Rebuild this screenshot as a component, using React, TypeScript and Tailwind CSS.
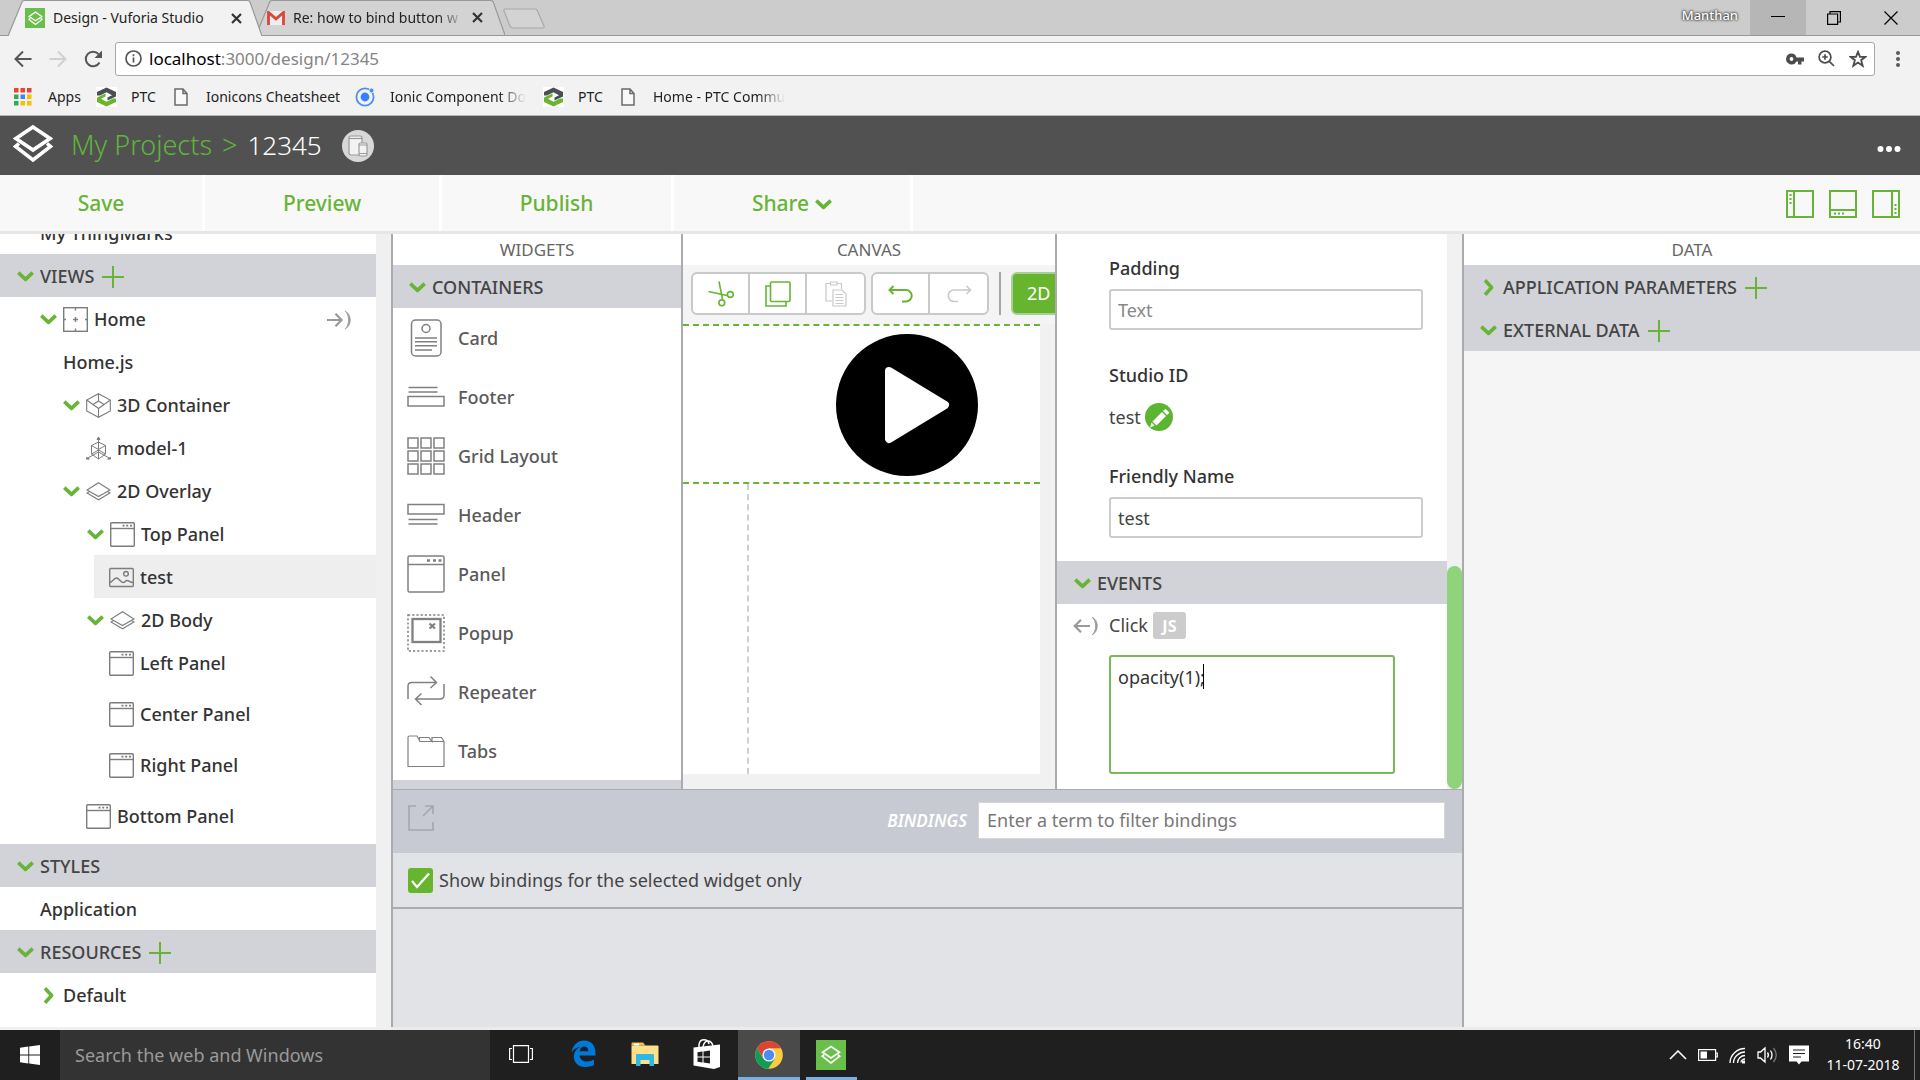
import React from "react";

type Kids = { children?: React.ReactNode };

const GREEN = "#67b436";

/* ---------- small shared glyphs ---------- */

function Chevron({ dir = "down", size = 17 }: { dir?: "down" | "right"; size?: number }) {
  return (
    <svg width={size} height={size} viewBox="0 0 17 17" fill="none" stroke={GREEN} strokeWidth="3.6" strokeLinecap="butt">
      {dir === "down" ? <path d="M1.3 4.6 8.5 11.4 15.7 4.6" strokeLinejoin="round" /> : <path d="M5 1.3 11.6 8.5 5 15.7" strokeLinejoin="round" />}
    </svg>
  );
}

function Plus() {
  return (
    <svg width="22" height="22" viewBox="0 0 22 22" stroke={GREEN} strokeWidth="2">
      <path d="M11 0v22M0 11h22" />
    </svg>
  );
}

function Layers({ color = "#fff", size = 40, stroke = 3.6 }: { color?: string; size?: number; stroke?: number }) {
  return (
    <svg width={size} height={size} viewBox="0 0 40 40" fill="none" stroke={color} strokeWidth={stroke}>
      <path d="M20 3 37 14.500 20 26 3 14.500Z" />
      <path d="M6 19.500 2.500 22.500 20 36 37.500 22.500 34 19.500" />
    </svg>
  );
}

function SignalArrow({ left = false }: { left?: boolean }) {
  return (
    <svg width="26" height="20" viewBox="0 0 26 20" fill="none" stroke="#999" strokeWidth="2.2">
      {left ? <path d="M17 10H2M8 3.8 1.8 10 8 16.2" /> : <path d="M1 10h14M9.5 3.8 15.5 10l-6 6.2" />}
      <path d="M19 1c4.8 3.6 4.8 14.400 0 18 7-3.600 7-14.400 0-18Z" fill="#999" stroke="#999" strokeWidth="0.8" />
    </svg>
  );
}

const thin = { fill: "none", stroke: "#7c7c7c", strokeWidth: 1.4 } as const;

function ViewIcon() {
  return (
    <svg width="25" height="25" viewBox="0 0 25 25" {...thin}>
      <rect x="0.7" y="0.7" width="23.6" height="23.6" />
      <path d="M12.500 1v2.500M12.500 21.500v2.500M1 12.500h2M22 12.500h2M12.500 10v5M10 12.500h5" />
    </svg>
  );
}
function CubeIcon() {
  return (
    <svg width="25" height="25" viewBox="0 0 25 25" {...thin} strokeWidth={1.1}>
      <path d="M12.500 0.700 24.300 7v11L12.500 24.300 0.700 18V7Z" />
      <path d="M0.700 7 12.500 15.500 24.300 7M12.500 15.500v8.800M12.500 0.700V8M7 11.500 12.500 8l5.500 3.500-5.500 4Z" />
    </svg>
  );
}
function ModelIcon() {
  return (
    <svg width="25" height="25" viewBox="0 0 25 25" {...thin} strokeWidth={1}>
      <path d="M12.500 6 19.500 9.500v8.500L12.500 23 5.500 18V9.500ZM5.500 9.500l7 4 7-4M12.500 2v21M1 22.500l11.500-6.500L24 22.500M5.500 18l7-4 7 4" />
      <path d="M11 3.500 12.500 1 14 3.500ZM0.500 21.500l0 1.600 2.800 0ZM24.500 21.500l0 1.600-2.800 0Z" fill="#7c7c7c" />
    </svg>
  );
}
function OverlayIcon() {
  return (
    <svg width="25" height="25" viewBox="0 0 25 25" {...thin} strokeWidth={1.1}>
      <path d="M12.500 3.700 24 11 12.500 17.500 1 11Z" />
      <path d="M3.500 12.500 1 14l11.500 6.800L24 14l-2.500-1.500" />
    </svg>
  );
}
function PanelIcon() {
  return (
    <svg width="25" height="25" viewBox="0 0 25 25" {...thin}>
      <rect x="0.7" y="0.7" width="23.6" height="23.6" rx="1" />
      <path d="M1 6.500h23" />
      <path d="M12.500 3.700h2M16.200 3.700h2M20 3.700h2" strokeWidth="1.800" />
    </svg>
  );
}
function ImageIcon() {
  return (
    <svg width="25" height="25" viewBox="0 0 25 25" {...thin}>
      <rect x="0.7" y="3.500" width="23.6" height="18" rx="1" />
      <circle cx="17" cy="8.800" r="2.300" />
      <path d="M1 17.500c3-1 4-4.500 6.500-4.500s4 4.500 6.500 4.500 2-2 4-2 3 2 6 2" />
    </svg>
  );
}

/* ---------- browser window frame ---------- */

function TabShape({ active = false }: { active?: boolean }) {
  return (
    <svg className="absolute inset-0 h-full w-full" viewBox="0 0 254 36" preserveAspectRatio="none">
      <path d="M0 36 14 2Q15 0.500 17 0.500H239Q241 0.500 242 2L254 36" fill={active ? "#f2f2f2" : "#d3d3d3"} stroke="#989898" strokeWidth="1.200" />
    </svg>
  );
}

function CloseX() {
  return (
    <svg width="11" height="11" viewBox="0 0 11 11" stroke="#333" strokeWidth="2.200">
      <path d="M1 1l9 9M10 1l-9 9" />
    </svg>
  );
}

function TabStrip() {
  return (
    <div className="flex h-9 items-stretch border-b border-[#989898] bg-[#cccccc] pl-2">
      <div className="relative z-10 -mb-px flex w-[254px] items-center pr-5 pl-[17px]">
        <TabShape active />
        <span className="relative flex h-5 w-5 items-center justify-center bg-[#6abf4b]">
          <Layers size={15} stroke={3.400} />
        </span>
        <span className="relative ml-2 flex-1 text-sm whitespace-nowrap text-[#222]">Design - Vuforia Studio</span>
        <button aria-label="Close tab" className="relative"><CloseX /></button>
      </div>
      <div className="relative -ml-1.5 flex w-[249px] items-center pr-[22px] pl-[11px]">
        <TabShape />
        <svg className="relative" width="18" height="14" viewBox="0 0 18 14">
          <path d="M1 0h16v14H1Z" fill="#eee" />
          <path d="M1.500 14V1.500L9 7.800l7.500-6.300V14" fill="none" stroke="#d9463a" strokeWidth="2.800" />
        </svg>
        <span className="relative ml-2 flex-1 overflow-hidden text-sm whitespace-nowrap text-[#222] [mask-image:linear-gradient(to_right,black_85%,transparent)]">
          Re: how to bind button w
        </span>
        <button aria-label="Close tab" className="relative ml-2"><CloseX /></button>
      </div>
      <button aria-label="New tab" className="-ml-0.5 flex items-center pt-0.5">
        <svg width="42" height="21" viewBox="0 0 42 21" fill="#d3d3d3" stroke="#a8a8a8" strokeWidth="1.200">
          <path d="M2 1H32Q33.500 1 34.500 3L41 18Q41.500 20 39.500 20H10Q8 20 7 18L1 3Q0.500 1 2 1Z" />
        </svg>
      </button>
      <div className="flex-1" />
      <span className="mt-1.5 mr-3 text-[13px] font-medium text-white [text-shadow:0_0_3px_#222,0_0_2px_#222]">Manthan</span>
      <button aria-label="Minimize" className="flex w-14 items-center justify-center bg-[#b6b6b6]">
        <svg width="14" height="14" viewBox="0 0 14 14" stroke="#000"><path d="M0 5.500h14" /></svg>
      </button>
      <button aria-label="Restore" className="flex w-14 items-center justify-center">
        <svg width="14" height="14" viewBox="0 0 14 14" fill="none" stroke="#000" strokeWidth="1.200"><path d="M0.600 3h10v10.400h-10ZM3 3V0.600h10.400V11H11" /></svg>
      </button>
      <button aria-label="Close" className="flex w-[58px] items-center justify-center">
        <svg width="14" height="14" viewBox="0 0 14 14" stroke="#000" strokeWidth="1.200"><path d="M0.500 0.500l13 13M13.500 0.500l-13 13" /></svg>
      </button>
    </div>
  );
}

function AddressBar() {
  return (
    <div className="flex h-[45px] items-center bg-[#f2f2f2] pr-5 pl-[14px]">
      <button aria-label="Back">
        <svg width="18" height="18" viewBox="0 0 18 18" fill="none" stroke="#555" strokeWidth="2"><path d="M17.500 9H2M9 1.500 1.500 9 9 16.500" /></svg>
      </button>
      <button aria-label="Forward" className="ml-[17px]">
        <svg width="18" height="18" viewBox="0 0 18 18" fill="none" stroke="#d0d0d0" strokeWidth="2"><path d="M0.500 9H16M9 1.500 16.500 9 9 16.500" /></svg>
      </button>
      <button aria-label="Reload" className="ml-[17px]">
        <svg width="19" height="18" viewBox="0 0 19 18" fill="none" stroke="#555" strokeWidth="2"><path d="M15.500 12.500A7.300 7.300 0 1 1 14.500 4" /><path d="M18 0.500V8H10.500Z" fill="#555" stroke="none" /></svg>
      </button>
      <div className="ml-[12px] flex h-[34px] flex-1 items-center rounded-[3px] border border-[#a9a9a9] bg-white pr-[7px] pl-[9px]">
        <svg width="17" height="17" viewBox="0 0 17 17" fill="none" stroke="#555" strokeWidth="1.700"><circle cx="8.500" cy="8.500" r="7.500" /><path d="M8.500 7.500v5M8.500 4.300v2" /></svg>
        <div className="ml-[7px] flex-1 text-[17px] text-[#858585]"><span className="text-black">localhost</span>:3000/design/12345</div>
        <div className="flex items-center gap-[14px]">
          <svg width="18" height="12" viewBox="0 0 18 12" fill="#4c4c4c"><path fillRule="evenodd" d="M5.500 0.500a5.500 5.500 0 1 0 5 8H12v3h3.500v-3H18v-4h-7.500a5.500 5.500 0 0 0-5-4Zm0 3.600a1.900 1.900 0 1 1 0 3.800 1.900 1.900 0 0 1 0-3.800Z" /></svg>
          <svg width="17" height="17" viewBox="0 0 17 17" fill="none" stroke="#4c4c4c" strokeWidth="1.700"><circle cx="7" cy="7" r="5.900" /><path d="M11.300 11.300 16 16M7 4.200v5.600M4.200 7h5.600" /></svg>
          <svg width="18" height="18" viewBox="0 0 18 18" fill="none" stroke="#4c4c4c" strokeWidth="1.800"><path d="M9 1.800l2 5h5.400l-4.300 3.400 1.600 5.600L9 12.500l-4.700 3.300 1.600-5.600L1.600 6.800H7Z" /></svg>
        </div>
      </div>
      <button aria-label="Menu" className="ml-[21px]">
        <svg width="4" height="16" viewBox="0 0 4 16" fill="#5a5a5a"><circle cx="2" cy="2" r="2" /><circle cx="2" cy="8" r="2" /><circle cx="2" cy="14" r="2" /></svg>
      </button>
    </div>
  );
}

function PtcLogo() {
  return (
    <svg width="21" height="20" viewBox="0 0 21 20">
      <rect width="21" height="20" fill="#fff" />
      <path d="M1 8.500V5L10.500 0.500 20 5v4.500L11.500 13.500V10.500L16 8.300 10.500 5.300 4 8.500Z" fill="#4a4f53" />
      <path d="M20 11.500V15L10.500 19.500 1 15V10.500L9.500 6.500V9.500L5 11.700l5.500 3L17 11.500Z" fill="#6ab42e" />
    </svg>
  );
}
function PageIcon() {
  return (
    <svg width="14" height="18" viewBox="0 0 14 18" fill="#f8f8f8" stroke="#6a6a6a" strokeWidth="1.500"><path d="M1 1h8l4 4.500V17H1ZM9 1v4.500h4" /></svg>
  );
}
function AppsIcon() {
  const c = ["#ea4335", "#ea4335", "#ea4335", "#34a853", "#4285f4", "#fbbc05", "#34a853", "#fbbc05", "#fbbc05"];
  return (
    <svg width="18" height="18" viewBox="0 0 18 18">
      {c.map((f, i) => <rect key={i} x={(i % 3) * 6.500} y={Math.floor(i / 3) * 6.500} width="4.500" height="4.500" fill={f} />)}
    </svg>
  );
}
function IonicIcon() {
  return (
    <svg width="21" height="20" viewBox="0 0 21 20"><circle cx="10" cy="10" r="8.600" fill="none" stroke="#4e8ef7" strokeWidth="1.800" /><circle cx="10" cy="10" r="4.400" fill="#3880ff" /><circle cx="16.500" cy="3.500" r="2.400" fill="#4e8ef7" stroke="#f2f2f2" strokeWidth="0.800" /></svg>
  );
}

function Bookmark({ icon, label, box, fade }: { icon: React.ReactNode; label: string; box: string; fade?: boolean }) {
  return (
    <a href="#" className={"flex items-center whitespace-nowrap " + box}>
      {icon}
      <span className={"overflow-hidden " + (fade ? "[mask-image:linear-gradient(to_right,black_80%,transparent)]" : "")}>{label}</span>
    </a>
  );
}

function BookmarksBar() {
  return (
    <nav className="flex h-[35px] items-center border-b border-[#b5b5b5] bg-[#f2f2f2] pb-[3px] pl-[14px] text-[14px] text-[#222]">
      <Bookmark icon={<AppsIcon />} label="Apps" box="w-[82px] gap-4" />
      <Bookmark icon={<PtcLogo />} label="PTC" box="w-[78px] gap-[14px]" />
      <Bookmark icon={<PageIcon />} label="Ionicons Cheatsheet" box="w-[181px] gap-[18px]" />
      <Bookmark icon={<IonicIcon />} label="Ionic Component Do" box="w-[172px] gap-[14px]" fade />
      <span className="w-4" />
      <Bookmark icon={<PtcLogo />} label="PTC" box="w-[78px] gap-[14px]" />
      <Bookmark icon={<PageIcon />} label="Home - PTC Commu" box="w-[168px] gap-[18px]" fade />
    </nav>
  );
}

/* ---------- studio chrome ---------- */

function StudioHeader() {
  return (
    <header className="flex h-[59px] items-center bg-[#515151] pr-[19px] pl-[13px]">
      <span className="pb-1"><Layers size={40} stroke={3.600} /></span>
      <h1 className="ml-[18px] flex items-center gap-[10px] text-[27px] font-light">
        <a href="#" className="text-[#5fb53a]">My Projects</a>
        <span className="text-[#5fb53a]">&gt;</span>
        <span className="text-[26px] text-white">12345</span>
      </h1>
      <span className="ml-5 flex h-8 w-8 items-center justify-center rounded-full bg-[#d8d8d8]">
        <svg width="20" height="22" viewBox="0 0 20 22" fill="#f2f2f2" stroke="#9a9a9a" strokeWidth="1.200"><rect x="1" y="1" width="13" height="19" rx="2" /><path d="M1 3.500h13" /><rect x="11" y="8" width="8" height="13" rx="1.500" /><path d="M11 10h8M11 18.500h8" /></svg>
      </span>
      <div className="flex-1" />
      <button aria-label="More" className="mt-[7px]">
        <svg width="24" height="8" viewBox="0 0 24 8" fill="#fff"><circle cx="3.500" cy="4" r="3" /><circle cx="12" cy="4" r="3" /><circle cx="20.500" cy="4" r="3" /></svg>
      </button>
    </header>
  );
}

function ActionBar() {
  const item = "flex items-center justify-center gap-[6px] border-r-3 border-white pt-0.5";
  return (
    <div className="flex h-[59px] items-stretch border-b-3 border-[#e6e6e6] bg-[#f8f8f8] text-[21px] font-medium text-[#67b436]">
      <button className={item + " w-[205px]"}>Save</button>
      <button className={item + " w-[237px]"}>Preview</button>
      <button className={item + " w-[232px]"}>Publish</button>
      <button className={item + " w-[239px]"}>Share <Chevron /></button>
      <div className="flex-1" />
      <div className="flex items-center gap-[15px] pt-0.5 pr-5">
        <button aria-label="Toggle left panel">
          <svg width="28" height="28" viewBox="0 0 28 28" fill="none" stroke={GREEN} strokeWidth="2"><path d="M1 1h26v26H1ZM8 1v26" /><path d="M3.500 5h2M3.500 9h2M3.500 13h2" /></svg>
        </button>
        <button aria-label="Toggle bottom panel">
          <svg width="28" height="28" viewBox="0 0 28 28" fill="none" stroke={GREEN} strokeWidth="2"><path d="M1 1h26v26H1ZM1 20h26" /><path d="M5 23.500h2M9 23.500h2M13 23.500h2" /></svg>
        </button>
        <button aria-label="Toggle right panel">
          <svg width="28" height="28" viewBox="0 0 28 28" fill="none" stroke={GREEN} strokeWidth="2"><path d="M1 1h26v26H1ZM20 1v26" /><path d="M22.500 15h2M22.500 19h2M22.500 23h2" /></svg>
        </button>
      </div>
    </div>
  );
}

/* ---------- left project tree ---------- */

function SectionBar({ label, open = true, add = false, pad = "pl-[17px]" }: { label: string; open?: boolean; add?: boolean; pad?: string }) {
  return (
    <div className={"flex h-[43px] shrink-0 items-center bg-[#d2d3d8] pt-0.5 text-[18px] font-medium text-[#444] " + pad}>
      <button className="flex items-center gap-[6px]"><Chevron dir={open ? "down" : "right"} />{label}</button>
      {add && <button aria-label={"Add to " + label} className="ml-2"><Plus /></button>}
    </div>
  );
}

function TreeRow({ label, icon, chevron, pad, tall, extra }: { label: string; icon?: React.ReactNode; chevron?: "down" | "right"; pad: string; tall?: boolean; extra?: React.ReactNode }) {
  return (
    <li className={tall ? "pb-2" : ""}>
      <div className={"flex h-[43px] items-center gap-[6px] pt-0.5 " + pad}>
        {chevron && <button aria-label={"Toggle " + label}><Chevron dir={chevron} /></button>}
        {icon}
        <a href="#">{label}</a>
        {extra}
      </div>
    </li>
  );
}

function ProjectTree() {
  return (
    <aside className="flex w-[391px] shrink-0 overflow-hidden bg-[#f0f0f0] text-[18px] font-medium text-[#333]">
      <div className="mb-[3px] flex w-[376px] flex-col bg-white">
        <div className="flex h-5 shrink-0 items-end overflow-hidden pl-10"><a href="#" className="pb-[9px] leading-6">My ThingMarks</a></div>
        <SectionBar label="VIEWS" add />
        <ul>
          <TreeRow label="Home" icon={<ViewIcon />} chevron="down" pad="pl-10 pr-6" extra={<button aria-label="Events" className="ml-auto"><SignalArrow /></button>} />
          <TreeRow label="Home.js" pad="pl-[63px]" />
          <TreeRow label="3D Container" icon={<CubeIcon />} chevron="down" pad="pl-[63px]" />
          <TreeRow label="model-1" icon={<ModelIcon />} pad="pl-[86px]" />
          <TreeRow label="2D Overlay" icon={<OverlayIcon />} chevron="down" pad="pl-[63px]" />
          <TreeRow label="Top Panel" icon={<PanelIcon />} chevron="down" pad="pl-[87px]" />
          <TreeRow label="test" icon={<ImageIcon />} pad="ml-[94px] bg-[#eeeeee] pl-[15px]" />
          <TreeRow label="2D Body" icon={<OverlayIcon />} chevron="down" pad="pl-[87px]" />
          <TreeRow label="Left Panel" icon={<PanelIcon />} pad="pl-[109px]" tall />
          <TreeRow label="Center Panel" icon={<PanelIcon />} pad="pl-[109px]" tall />
          <TreeRow label="Right Panel" icon={<PanelIcon />} pad="pl-[109px]" tall />
          <TreeRow label="Bottom Panel" icon={<PanelIcon />} pad="pl-[86px]" />
        </ul>
        <div className="h-[7px] shrink-0" />
        <SectionBar label="STYLES" />
        <ul><TreeRow label="Application" pad="pl-10" /></ul>
        <SectionBar label="RESOURCES" add />
        <ul><TreeRow label="Default" chevron="right" pad="pl-10" /></ul>
      </div>
    </aside>
  );
}

/* ---------- widgets palette ---------- */

const wi = { width: 38, height: 38, viewBox: "0 0 38 38", fill: "none", stroke: "#808080", strokeWidth: 1.5 } as const;

const widgets: { label: string; icon: React.ReactNode }[] = [
  { label: "Card", icon: <svg {...wi}><rect x="4.500" y="1" width="29.500" height="36" rx="4" /><circle cx="19" cy="9.500" r="4" /><path d="M8 19h22M8 22.800h22M8 26.800h22M8 31h17" /></svg> },
  { label: "Footer", icon: <svg {...wi}><path d="M1.500 9.500h29M1.500 14h29" /><rect x="1" y="18.500" width="36" height="9.500" /></svg> },
  { label: "Grid Layout", icon: <svg {...wi}>{[1, 14, 27].map((y) => [1, 14, 27].map((x) => <rect key={x + "-" + y} x={x} y={y} width="10" height="10" />))}</svg> },
  { label: "Header", icon: <svg {...wi}><rect x="1" y="8.500" width="36" height="9.500" /><path d="M1.500 23.500h29M1.500 28h29" /></svg> },
  { label: "Panel", icon: <svg {...wi}><rect x="1" y="1" width="36" height="36" rx="1.500" /><path d="M1 9.500h36" /><path d="M20 5.500h3M26 5.500h3M31.500 5.500h3" strokeWidth="2.600" /></svg> },
  { label: "Popup", icon: <svg {...wi}><rect x="1" y="1" width="36" height="36" strokeDasharray="2.200 2" /><rect x="5.500" y="5" width="28" height="23" strokeWidth="2.300" /><path d="M22.500 9.500l5.500 5M28 9.500l-5.500 5" strokeWidth="2.200" /></svg> },
  { label: "Repeater", icon: <svg {...wi}><path d="M1 26V13q0-3.500 4-3.500H29M23.500 3.500 29.500 9.500l-6 5.500M37 11V22q0 4-4 4H9M14.500 20.500l-6 5.500 6 6" /></svg> },
  { label: "Tabs", icon: <svg {...wi} strokeWidth={1.2}><path d="M1 34.500V5.500q0-1.500 1.500-1.500h7.500L13 9.500h24v25ZM12.500 9.500V5.500H22L25 9.500V5.500h9.500L37 9.500M1 34.500H37" /></svg> },
];

function PaneTitle({ children }: Kids) {
  return <h2 className="flex h-[31px] shrink-0 items-center justify-center bg-white text-[17px] text-[#666]">{children}</h2>;
}

function WidgetsPane() {
  return (
    <section className="flex w-[290px] shrink-0 flex-col overflow-hidden border-r-2 border-[#a9abad] bg-white">
      <PaneTitle>WIDGETS</PaneTitle>
      <SectionBar label="CONTAINERS" pad="pl-4" />
      <ul className="text-[18px] font-medium text-[#5a5a5a]">
        {widgets.map((w) => (
          <li key={w.label} className="flex h-[59px] items-center gap-[13px] pt-px pl-[14px]">{w.icon}{w.label}</li>
        ))}
      </ul>
      <div className="flex-1 bg-[#d2d3d8]" />
    </section>
  );
}

/* ---------- canvas ---------- */

function ToolGroup({ children }: Kids) {
  return <div className="flex h-[43px] shrink-0 divide-x-2 divide-[#c9c9c9] rounded-md border-2 border-[#c9c9c9] bg-white">{children}</div>;
}
function ToolButton({ label, children }: Kids & { label: string }) {
  return <button aria-label={label} className="flex w-[57px] items-center justify-center">{children}</button>;
}

function CanvasPane() {
  return (
    <section className="flex min-w-0 flex-1 flex-col overflow-hidden bg-[#f1f1f1]">
      <PaneTitle>CANVAS</PaneTitle>
      <div className="flex h-[59px] shrink-0 items-start overflow-hidden bg-[#f4f4f4] pt-[7px] pl-2">
        <ToolGroup>
          <ToolButton label="Cut">
            <svg width="26" height="26" viewBox="0 0 26 26" fill="none" stroke={GREEN} strokeWidth="1.600"><path d="M11 0.500 14.500 18M0.500 10.500 19 14.500" /><circle cx="13.800" cy="21.800" r="2.900" /><circle cx="22.300" cy="13.500" r="2.900" /></svg>
          </ToolButton>
          <ToolButton label="Copy">
            <svg width="26" height="26" viewBox="0 0 26 26" fill="none" stroke={GREEN} strokeWidth="1.600"><rect x="5.500" y="1" width="19.500" height="19.500" rx="1" /><path d="M5.500 5H1v20h20v-4.500" /></svg>
          </ToolButton>
          <ToolButton label="Paste">
            <svg width="22" height="26" viewBox="0 0 22 26" fill="none" stroke="#c9c9c9" strokeWidth="1.200"><path d="M7 20H1V2.500h4.500M12 2.500h4.500V8M5.500 1h6.500v3H5.500ZM8 9h9l4 4v12H8ZM10.500 13.500h7M10.500 16.500h8M10.500 19.500h8M10.500 22.500h8" /></svg>
          </ToolButton>
        </ToolGroup>
        <div className="w-[5px] shrink-0" />
        <ToolGroup>
          <ToolButton label="Undo">
            <svg width="26" height="18" viewBox="0 0 26 18" fill="none" stroke={GREEN} strokeWidth="2"><path d="M1.500 5H18a5.500 5.500 0 0 1 0 11.500H14M5.500 1 1.500 5l4 4" /></svg>
          </ToolButton>
          <ToolButton label="Redo">
            <svg width="26" height="18" viewBox="0 0 26 18" fill="none" stroke="#c9c9c9" strokeWidth="1.600"><path d="M24.500 5H8a5.500 5.500 0 0 0 0 11.500h4M20.500 1l4 4-4 4" /></svg>
          </ToolButton>
        </ToolGroup>
        <div className="mx-[10px] h-[43px] w-[2px] shrink-0 bg-[#a5a5a5]" />
        <button className="h-[43px] w-[76px] shrink-0 rounded-md border-2 border-[#a8cf96] bg-[#67b52e] pl-[14px] text-left text-[18px] text-white">2D</button>
      </div>
      <div className="mr-[15px] mb-[15px] flex flex-1 flex-col bg-white">
        <div className="flex h-[160px] items-center justify-center border-y-2 border-dashed border-[#67b436] pt-0.5 pl-[91px]">
          <svg width="142" height="142" viewBox="0 0 142 142"><circle cx="71" cy="71" r="71" fill="#000" /><path d="M53 37 109 71 53 105Z" fill="#fff" stroke="#fff" strokeWidth="8" strokeLinejoin="round" /></svg>
        </div>
        <div className="flex-1 pl-16"><div className="h-full border-l-2 border-dashed border-[#cfcfcf]" /></div>
      </div>
    </section>
  );
}

/* ---------- properties ---------- */

function PropertiesPane() {
  const field = "mt-2 block h-[41px] w-full rounded-[3px] border-2 border-[#cccccc] bg-white px-[7px] text-[18px] text-[#444] placeholder-[#888]";
  return (
    <section className="flex w-[407px] shrink-0 border-l-2 border-[#a9abad] bg-white text-[18px] text-[#444]">
      <div className="flex min-w-0 flex-1 flex-col">
        <div className="h-[327px] pt-[21px] pr-6 pl-[52px]">
          <label className="block leading-[26px] font-medium text-[#333]">Padding<input className={field + " font-normal"} placeholder="Text" /></label>
          <h3 className="mt-8 leading-[26px] font-medium text-[#333]">Studio ID</h3>
          <div className="mt-[13px] flex h-8 items-center gap-1">
            test
            <button aria-label="Edit Studio ID">
              <svg width="28" height="28" viewBox="0 0 28 28"><circle cx="14" cy="14" r="14" fill="#5cb531" /><g fill="#fff"><path d="M5 24.500 6.500 19.500 9.500 22.500Z" /><path d="M7.500 18.500 17 9l4 4-9.500 9.500Z" /><path d="M18 8l2.500-2.200 4 4L22 12Z" /></g></svg>
            </button>
          </div>
          <label className="mt-[30px] block leading-[26px] font-medium text-[#333]">Friendly Name<input className={field + " font-normal"} defaultValue="test" /></label>
        </div>
        <SectionBar label="EVENTS" />
        <div className="flex h-[43px] items-center pl-4">
          <SignalArrow left />
          <label htmlFor="click-js" className="ml-[10px]">Click</label>
          <button className="ml-[5px] flex h-[27px] w-[33px] items-center justify-center rounded-[3px] bg-[#cccccc] text-[16px] font-bold text-white">JS</button>
        </div>
        <div className="relative mt-2 mr-[52px] ml-[52px]">
          <textarea id="click-js" className="block h-[119px] w-full resize-none rounded-[3px] border-2 border-[#79b95a] bg-white px-[7px] py-[7px] text-[18px] leading-[26px] text-[#333]" defaultValue="opacity(1);" />
          <span className="absolute top-[9px] left-[94px] h-[25px] w-px bg-black" />
        </div>
      </div>
      <div className="flex w-[15px] flex-col justify-end bg-[#f1f1f1]"><div className="h-[223px] rounded-full bg-[#8fd37a]" /></div>
    </section>
  );
}

/* ---------- bindings ---------- */

function BindingsPane() {
  return (
    <section className="flex flex-1 flex-col border-t border-[#a9abad] bg-[#e2e3e7] text-[18px]">
      <div className="flex h-[63px] shrink-0 items-center bg-[#c7cad3] pr-[17px] pb-[3px] pl-[15px]">
        <button aria-label="Pop out" className="pb-1">
          <svg width="26" height="26" viewBox="0 0 26 26" fill="none" stroke="#a3a6ad" strokeWidth="1.600"><path d="M8 1H1v24h24v-8M15 11 25 1M17 1h8v8" /></svg>
        </button>
        <div className="flex-1" />
        <label htmlFor="binding-filter" className="mr-[11px] pt-0.5 text-[17px] font-semibold text-white italic">BINDINGS</label>
        <input id="binding-filter" className="h-[37px] w-[467px] border border-[#d5d6da] bg-white px-2 placeholder-[#777]" placeholder="Enter a term to filter bindings" />
      </div>
      <div className="flex h-[56px] shrink-0 items-center border-b-2 border-[#a9abad] pl-[15px]">
        <label className="relative flex items-center gap-[6px] text-[#444]">
          <input type="checkbox" defaultChecked className="h-[25px] w-[25px] appearance-none rounded-[3px] bg-[#67b52e]" />
          <svg className="absolute left-[3px]" width="19" height="19" viewBox="0 0 19 19" fill="none" stroke="#fff" strokeWidth="2.200"><path d="M1 10l5 6L18 2.500" /></svg>
          Show bindings for the selected widget only
        </label>
      </div>
    </section>
  );
}

/* ---------- taskbar ---------- */

function TaskSlot({ label, active, running, children }: Kids & { label: string; active?: boolean; running?: boolean }) {
  return (
    <button aria-label={label} className={"flex w-[62px] flex-col items-center " + (active ? "bg-[#4a4a4a]" : "")}>
      <span className="flex flex-1 items-center">{children}</span>
      <span className={"h-[3px] " + (active ? "-mt-[3px] w-full bg-[#76b0e6]" : running ? "-mt-[3px] w-[51px] bg-[#76b0e6]" : "")} />
    </button>
  );
}

function Taskbar() {
  return (
    <footer className="flex h-[50px] shrink-0 items-stretch bg-[#1f1f1f]">
      <button aria-label="Start" className="flex w-[60px] items-center justify-center">
        <svg width="20" height="20" viewBox="0 0 20 20" fill="#fff"><path d="M0 2.800 8.300 1.600v7.900H0ZM9.200 1.500 20 0v9.500H9.200ZM0 10.400h8.300v8L0 17.200ZM9.200 10.400H20V20L9.200 18.500Z" /></svg>
      </button>
      <input aria-label="Search" placeholder="Search the web and Windows" className="w-[430px] bg-[#333333] px-[15px] text-[18px] placeholder-[#9a9a9a]" />
      <TaskSlot label="Task view">
        <svg width="24" height="18" viewBox="0 0 24 18" fill="none" stroke="#fff" strokeWidth="1.200"><path d="M4.500 0.600h15v16.800h-15ZM3 3.500H0.600v11H3M21 3.500h2.400v11H21" /></svg>
      </TaskSlot>
      <TaskSlot label="Edge">
        <svg width="25" height="27" viewBox="0 0 25 27" fill="#0078d7"><path d="M0.500 12.500C1.500 5 7 0.500 13 0.500c7.500 0 11.500 5.500 11.500 12v3H8.500c0.300 4 4 6 7.500 6 2.800 0 5-0.700 7-2v5.500c-2.400 1.200-5 2-8.500 2C7 27 2.800 22 2.800 17c0-4.700 2.700-8.300 6.500-10C5.500 7.300 2.300 9.300 0.500 12.500ZM8.700 11.300h8.600c0-3.200-1.500-4.800-4-4.800s-4.200 2-4.600 4.800Z" /></svg>
      </TaskSlot>
      <TaskSlot label="File Explorer">
        <svg width="28" height="24" viewBox="0 0 28 24"><path d="M0.500 1.500q0-1 1-1H12l2.500 3H0.500Z" fill="#f0c24a" /><path d="M0.500 3.500H26.500q1 0 1 1V22H0.500Z" fill="#ffe08a" /><path d="M3 1.500h5v2H3Z" fill="#fff" /><path d="M5 24V13q0-1 1-1H22q1 0 1 1V24H18.500V18h-9v6Z" fill="#2fb8e6" /></svg>
      </TaskSlot>
      <TaskSlot label="Store">
        <svg width="28" height="30" viewBox="0 0 28 30"><path d="M6 8V5.500C6.500 2.500 8.500 0.800 11 0.800S15.500 2.500 16 5M10 8C10.500 4.500 12.500 1.500 15.500 2S19.500 5 20 7" fill="none" stroke="#fff" strokeWidth="1.500" /><path d="M0.500 8.500 27 5.500V28L21 30 0.500 26.500Z" fill="#fff" /><path d="M4.500 13.300l5-0.700v5h-5ZM10.500 12.500l6.500-0.900v6h-6.500ZM4.500 18.500h5v5l-5-0.700ZM10.500 18.500H17v6l-6.500-0.900Z" fill="#1f1f1f" /></svg>
      </TaskSlot>
      <TaskSlot label="Chrome" active>
        <svg width="28" height="28" viewBox="0 0 28 28"><circle cx="14" cy="14" r="13.800" fill="#fccb3f" /><path d="M14 7.200H26A13.800 13.800 0 0 0 2 7.100L8 17Z" fill="#db4437" /><path d="M2 7.100A13.800 13.800 0 0 0 13.200 27.800L20 17.400 14 14 8 17.300Z" fill="#0f9d58" /><circle cx="14" cy="14" r="6.600" fill="#f4f4f4" /><circle cx="14" cy="14" r="5.200" fill="#4c8bf5" /></svg>
      </TaskSlot>
      <TaskSlot label="Vuforia Studio" running>
        <span className="flex h-[30px] w-[30px] items-center justify-center bg-[#6abf4b]"><Layers size={20} stroke={3.400} /></span>
      </TaskSlot>
      <div className="flex-1" />
      <div className="flex items-center gap-[11px] pr-4">
        <svg width="18" height="10" viewBox="0 0 18 10" fill="none" stroke="#fff" strokeWidth="1.600"><path d="M1 9l8-8 8 8" /></svg>
        <svg width="20" height="12" viewBox="0 0 20 12" fill="none" stroke="#fff" strokeWidth="1.200"><rect x="0.600" y="0.600" width="17" height="10.800" /><path d="M18 4h1.300v4H18" /><rect x="2.500" y="2.500" width="6.500" height="7" fill="#fff" stroke="none" /></svg>
        <svg width="17" height="17" viewBox="0 0 17 17" fill="none" stroke="#fff" strokeWidth="1.300"><path d="M1 16C1 8 8 1.500 16 1.500M4.500 16C4.500 10 10 5 16 5M8.500 16c0-4 3.500-7.500 7.500-7.500M12 15.500c0-2 2-3.500 4-3.500" /><rect x="13" y="13.500" width="3" height="3" fill="#fff" stroke="none" /></svg>
        <svg width="21" height="18" viewBox="0 0 21 18" fill="none" stroke="#fff" strokeWidth="1.300"><path d="M1 6h2.500L8 2v14L3.500 12H1ZM10.500 6.500q1.800 2.500 0 5M13.500 4.500q3 4.500 0 9" /><path d="M16.500 2q5.500 7 0 14" stroke="#777" /></svg>
        <svg width="20" height="20" viewBox="0 0 20 20"><path d="M0 0.500H20V16.500H12.500L10 19.500 7.500 16.500H0Z" fill="#fff" /><path d="M4 5h12M4 8.500h12M4 12h8" stroke="#1f1f1f" strokeWidth="1.200" /></svg>
      </div>
      <div className="mr-[13px] flex w-[76px] flex-col items-center justify-center pb-0.5 text-[14px] leading-[21px] whitespace-nowrap text-white">
        <span>16:40</span>
        <span>11-07-2018</span>
      </div>
      <div className="w-[6px] border-l border-[#777]" />
    </footer>
  );
}

export default function App() {
  return (
    <div className="flex min-h-screen flex-col bg-[#ebebeb] font-['Noto_Sans',sans-serif] [&_button]:shrink-0 [&_svg]:shrink-0">
      <TabStrip />
      <AddressBar />
      <BookmarksBar />
      <StudioHeader />
      <ActionBar />
      <main className="flex flex-1 items-stretch">
        <ProjectTree />
        <div className="mb-[3px] flex min-w-0 flex-1 flex-col border-x-2 border-[#a9abad]">
          <div className="flex h-[555px] shrink-0">
            <WidgetsPane />
            <CanvasPane />
            <PropertiesPane />
          </div>
          <BindingsPane />
        </div>
        <aside className="mb-[3px] w-[456px] shrink-0 bg-[#f5f5f5]">
          <PaneTitle>DATA</PaneTitle>
          <SectionBar label="APPLICATION PARAMETERS" open={false} add pad="pl-4" />
          <SectionBar label="EXTERNAL DATA" add pad="pl-4" />
        </aside>
      </main>
      <Taskbar />
    </div>
  );
}
